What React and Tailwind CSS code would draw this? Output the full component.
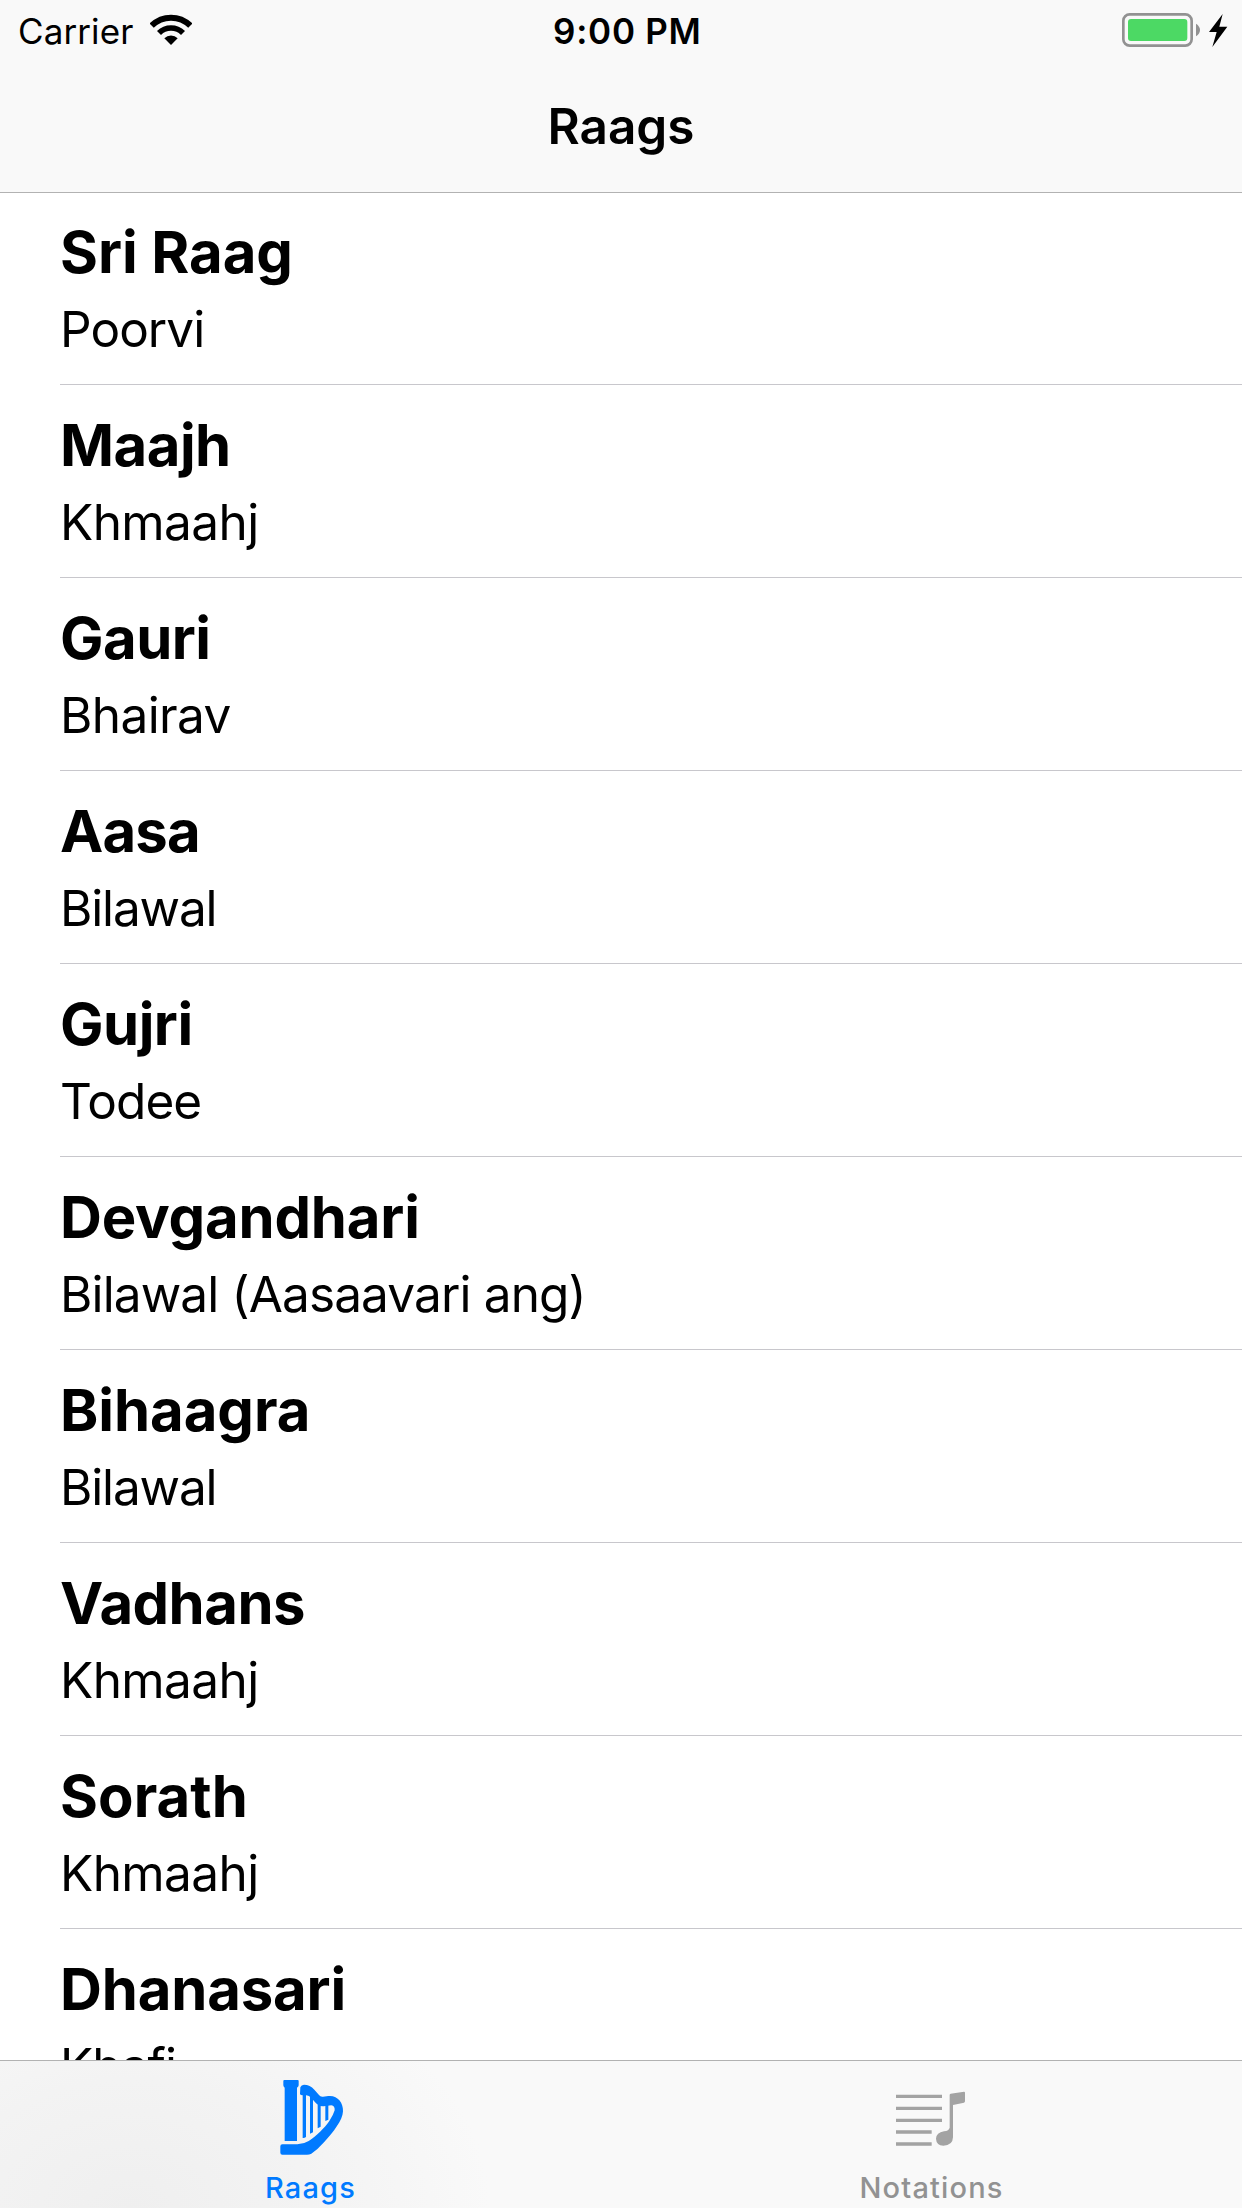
const raags = [
  { name: 'Sri Raag', thaat: 'Poorvi', nameCls: 'tracking-[-0.05px]', thaatCls: 'tracking-[-0.95px]' },
  { name: 'Maajh', thaat: 'Khmaahj', nameCls: 'tracking-[-0.5px]', thaatCls: 'tracking-[-0.6px]' },
  { name: 'Gauri', thaat: 'Bhairav', nameCls: 'tracking-[-0.5px]', thaatCls: 'tracking-[-0.6px]' },
  { name: 'Aasa', thaat: 'Bilawal', nameCls: 'tracking-[-0.8px]', thaatCls: 'tracking-[-1.15px]' },
  { name: 'Gujri', thaat: 'Todee', nameCls: 'tracking-[-0.5px]', thaatCls: 'tracking-[-0.9px]' },
  { name: 'Devgandhari', thaat: 'Bilawal (Aasaavari ang)', nameCls: 'tracking-[-0.18px]', thaatCls: 'tracking-[-0.86px]' },
  { name: 'Bihaagra', thaat: 'Bilawal', nameCls: 'tracking-[-0.05px]', thaatCls: 'tracking-[-1.15px]' },
  { name: 'Vadhans', thaat: 'Khmaahj', nameCls: 'tracking-[-0.5px]', thaatCls: 'tracking-[-0.6px]' },
  { name: 'Sorath', thaat: 'Khmaahj', nameCls: 'tracking-[0.05px]', thaatCls: 'tracking-[-0.6px]' },
  { name: 'Dhanasari', thaat: 'Khafi', nameCls: 'tracking-[-0.15px]', thaatCls: 'tracking-[-0.9px]' },
];

function WifiIcon() {
  return (
    <svg viewBox="450 42 126 96" className="mt-1 h-8 w-[42px]" fill="none" stroke="#000">
      <path d="M455 77A82 82 0 0 1 571 77" strokeWidth="18" />
      <path d="M477 99A51 51 0 0 1 549 99" strokeWidth="17" />
      <path d="M493 115A28 28 0 0 1 533 115L513 135Z" fill="#000" stroke="none" />
    </svg>
  );
}

function BatteryIcon() {
  return (
    <svg viewBox="120 36 318 108" className="mt-0.5 h-9 w-[106px]">
      <rect x="124" y="43" width="205" height="94" rx="19" fill="none" stroke="#929292" strokeWidth="8" />
      <rect x="138" y="57" width="178" height="66" rx="9" fill="#4cd964" />
      <path d="M342 71C350 76 354 83 354 90C354 97 350 104 342 109Z" fill="#929292" />
      <path d="M422 42L381 96H404L391 141L436 80H412Z" fill="#000" />
    </svg>
  );
}

function HarpIcon() {
  return (
    <svg viewBox="111 87 201 231" className="h-[77px] w-[67px]" fill="currentColor">
      <path d="M133 90H173Q176 90 176 93V106Q176 110 171 113V273H134V113Q130 110 130 106V93Q130 90 133 90Z" />
      <path
        fillRule="evenodd"
        d="M181 112Q184 104 192 104Q210 104 223 119L237 135Q241 141 249 140L265 138C292 135 310 157 309 184C308 211 281 245 252 277Q233 299 214 311Q208 314 201 314H127Q121 314 121 308V289Q121 283 127 283H172Q190 283 206 273C230 258 253 234 268 213Q280 195 284 181Q285 167 274 166Q262 168 251 169Q237 170 228 160L216 146Q208 136 196 135Q181 137 180 132Z"
      />
      <path d="M188 132H198V261Q193 265 188 264ZM210 140H219V247L210 251ZM233 162H242V230L233 235ZM256 165H265V209L256 213Z" />
    </svg>
  );
}

function NotationIcon() {
  return (
    <svg viewBox="168 87 213 231" className="h-[77px] w-[71px]" fill="#a3a3a3">
      <path d="M168 134H306V144H168ZM168 170H306V180H168ZM168 206H306V216H168ZM168 241H275V251H168ZM168 277H275V287H168Z" />
      <path d="M329 134Q329 132 332 131L372 125Q375 125 375 128V154Q375 157 372 158L339 165V262Q338 287 310 287Q289 286 288 266Q289 248 312 244Q327 242 329 233Z" />
    </svg>
  );
}

function Tab({ icon, label, className }) {
  return (
    <button className={`flex flex-1 flex-col items-center gap-[14px] pt-[18px] ${className}`}>
      {icon}
      <span className="text-[29px] leading-9 font-[460] tracking-[1.15px]">{label}</span>
    </button>
  );
}

export default function App() {
  return (
    <div className="flex h-[2208px] w-[1242px] flex-col overflow-hidden bg-white font-[Inter,sans-serif] text-black">
      <header className="z-10 -mb-px h-[193px] shrink-0 border-b border-[#b2b2b2] bg-[#f9f9f9]">
        <div className="grid h-24 grid-cols-[553px_1fr_auto] items-start pt-2.5 pr-[14px] text-[35px] leading-[42px]">
          <div className="flex items-start pl-[18px]">
            <span className="w-[132px] tracking-[0.1px]">Carrier</span>
            <WifiIcon />
          </div>
          <span className="font-[560] tracking-[0.75px]">9:00 PM</span>
          <BatteryIcon />
        </div>
        <h1 className="text-center text-[49.5px] leading-[60px] font-semibold">Raags</h1>
      </header>

      <main className="min-h-0 flex-1 overflow-hidden">
        <ul className="pl-[60px]">
          {raags.map((r) => (
            <li key={r.name} className="flex h-[193px] flex-col gap-[11px] border-b border-[#c8c7cc] pt-6 whitespace-nowrap">
              <span className={`text-[58px] leading-[72px] font-bold ${r.nameCls}`}>{r.name}</span>
              <span className={`text-[49.5px] leading-[60px] ${r.thaatCls}`}>{r.thaat}</span>
            </li>
          ))}
        </ul>
      </main>

      <nav className="flex h-[148px] shrink-0 border-t border-[#b2b2b2] bg-[#f9f9f9] bg-[radial-gradient(ellipse_360px_260px_at_130px_148px,#efefef,#f3f3f3_50%,#f9f9f9)]">
        <Tab icon={<HarpIcon />} label="Raags" className="text-[#007aff]" />
        <Tab icon={<NotationIcon />} label="Notations" className="text-[#929292]" />
      </nav>
    </div>
  );
}
